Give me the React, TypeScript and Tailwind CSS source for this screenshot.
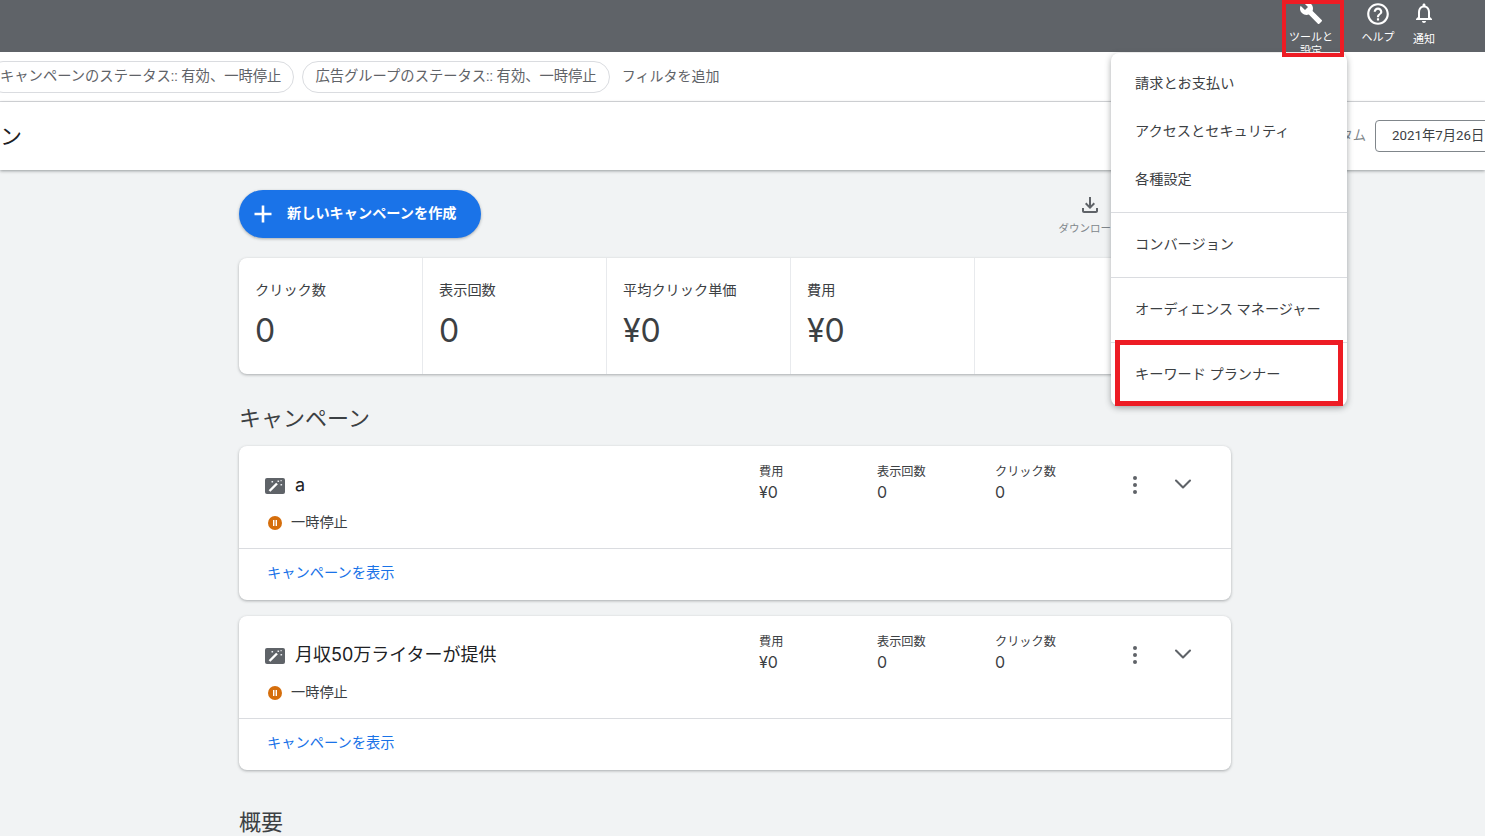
import { ChevronDown } from "lucide-react";

const buildPath =
  "M22.7 19l-9.1-9.1c.9-2.3.4-5-1.5-6.9-2-2-5-2.4-7.4-1.3L9 6 6 9 1.6 4.7C.4 7.1.9 10.1 2.9 12.1c1.9 1.9 4.6 2.4 6.9 1.5l9.1 9.1c.4.4 1 .4 1.4 0l2.3-2.3c.5-.4.5-1.1.1-1.4z";
const helpPath =
  "M11 18h2v-2h-2v2zm1-16C6.48 2 2 6.48 2 12s4.48 10 10 10 10-4.48 10-10S17.52 2 12 2zm0 18c-4.41 0-8-3.59-8-8s3.59-8 8-8 8 3.59 8 8-3.59 8-8 8zm0-14c-2.21 0-4 1.79-4 4h2c0-1.1.9-2 2-2s2 .9 2 2c0 2-3 1.75-3 5h2c0-2.25 3-2.5 3-5 0-2.21-1.79-4-4-4z";
const bellPath =
  "M12 22c1.1 0 2-.9 2-2h-4c0 1.1.89 2 2 2zm6-6v-5c0-3.07-1.64-5.64-4.5-6.32V4c0-.83-.67-1.5-1.5-1.5s-1.5.67-1.5 1.5v.68C7.63 5.36 6 7.92 6 11v5l-2 2v1h16v-1l-2-2zm-2 1H8v-6c0-2.48 1.51-4.5 4-4.5s4 2.02 4 4.5v6z";
const downloadPath =
  "M18 15v3H6v-3H4v3c0 1.1.9 2 2 2h12c1.1 0 2-.9 2-2v-3h-2zm-1-4l-1.41-1.41L13 12.17V4h-2v8.17L8.41 9.59 7 11l5 5 5-5z";

const stats = [
  { label: "クリック数", value: "0" },
  { label: "表示回数", value: "0" },
  { label: "平均クリック単価", value: "¥0" },
  { label: "費用", value: "¥0" },
];

const metrics = [
  { label: "費用", value: "¥0" },
  { label: "表示回数", value: "0" },
  { label: "クリック数", value: "0" },
];

const menuGroups = [
  ["請求とお支払い", "アクセスとセキュリティ", "各種設定"],
  ["コンバージョン"],
  ["オーディエンス マネージャー"],
  ["キーワード プランナー"],
];

const Icon = ({ d, className }: { d: string; className: string }) => (
  <svg viewBox="0 0 24 24" className={className} fill="currentColor">
    <path d={d} />
  </svg>
);

const CampaignCard = ({ name }: { name: string }) => (
  <div className="w-[992px] bg-white rounded-lg shadow-[0_1px_3px_rgba(60,64,67,0.4)]">
    <div className="h-[103px] flex border-b border-[#dadce0] pl-[26px]">
      <div className="w-[494px] pt-[28px]">
        <div className="flex items-center h-[24px]">
          <svg viewBox="0 0 20 16" className="w-[20px] h-[16px]">
            <rect width="20" height="16" rx="2" fill="#5f6368" />
            <path d="M4.5 13 12 5.5" stroke="#fff" strokeWidth="2.4" />
            <path d="M12.5 2.5h1.6v1.6h-1.6zM15.5 6h1.6v1.6h-1.6zM6.5 3h1.6v1.6H6.5zM15.5 2h1.2v1.2h-1.2z" fill="#e8eaed" />
          </svg>
          <span className="ml-[10px] -mt-[3px] text-[18px] text-[#202124] font-[Inter,'Noto_Sans_CJK_JP',sans-serif]">{name}</span>
        </div>
        <div className="flex items-center mt-[15px] pl-[3px] h-[20px]">
          <svg viewBox="0 0 14 14" className="w-[14px] h-[14px]">
            <circle cx="7" cy="7" r="7" fill="#d56e0c" />
            <path d="M5 4h1.4v6H5zM7.6 4H9v6H7.6z" fill="#fff" />
          </svg>
          <span className="ml-[9px] text-[14.2px] text-[#3c4043]">一時停止</span>
        </div>
      </div>
      <div className="flex pt-[17px]">
        {metrics.map((m) => (
          <div key={m.label} className="w-[118px]">
            <div className="text-[12.2px] leading-[18px] text-[#3c4043]">{m.label}</div>
            <div className="text-[16px] leading-[22px] text-[#3c4043] font-[Inter,sans-serif]">{m.value}</div>
          </div>
        ))}
      </div>
      <div className="pt-[30px] pl-[20px] flex flex-col gap-[3px] w-[48px] items-start">
        <span className="block w-[4px] h-[4px] rounded-full bg-[#5f6368]" />
        <span className="block w-[4px] h-[4px] rounded-full bg-[#5f6368]" />
        <span className="block w-[4px] h-[4px] rounded-full bg-[#5f6368]" />
      </div>
      <div className="pt-[24px] pl-[8px]">
        <ChevronDown className="w-[28px] h-[28px] text-[#5f6368]" strokeWidth={1.8} />
      </div>
    </div>
    <div className="h-[51px] flex items-center pl-[28px] pb-[2px] text-[14.25px] text-[#1a73e8]">キャンペーンを表示</div>
  </div>
);

export default function App() {
  return (
    <div
      className="relative w-[1485px] h-[836px] overflow-hidden bg-[#f1f3f4]"
      style={{ fontFamily: 'Roboto, "Noto Sans CJK JP", sans-serif' }}
    >
      {/* ヘッダー */}
      <div className="h-[52px] bg-[#5f6368] flex justify-end pr-[41px] overflow-hidden text-white">
        <div className="w-[60px] mr-[11px] flex flex-col items-center pt-[1px]">
          <Icon d={buildPath} className="w-[24px] h-[24px] shrink-0" />
          <div className="text-[11px] leading-[14px] mt-[6px] text-center shrink-0">
            ツールと
            <br />
            設定
          </div>
        </div>
        <div className="w-[52px] flex flex-col items-center pt-[1px]">
          <Icon d={helpPath} className="w-[26px] h-[26px] shrink-0" />
          <div className="text-[11px] leading-[14px] mt-[4px]">ヘルプ</div>
        </div>
        <div className="w-[40px] flex flex-col items-center pt-[1px]">
          <Icon d={bellPath} className="w-[24px] h-[24px] shrink-0" />
          <div className="text-[11px] leading-[14px] mt-[8px]">通知</div>
        </div>
      </div>

      {/* フィルタ */}
      <div className="h-[50px] bg-white border-b border-[#dadce0] flex items-center gap-[8px] -ml-[13px] text-[14.3px] text-[#5f6368]">
        <div className="h-[32px] flex items-center px-[12px] border border-[#dadce0] rounded-full whitespace-nowrap">
          キャンペーンのステータス:: 有効、一時停止
        </div>
        <div className="h-[32px] flex items-center px-[12px] border border-[#dadce0] rounded-full whitespace-nowrap">
          広告グループのステータス:: 有効、一時停止
        </div>
        <span className="ml-[4px] text-[14px]">フィルタを追加</span>
      </div>

      {/* タイトル */}
      <div className="relative h-[68px] bg-white shadow-[0_1px_3px_rgba(60,64,67,0.5)] flex items-center justify-between">
        <span className="text-[22px] text-[#202124]">ン</span>
        <div className="flex items-center gap-[9px] -mr-[40px]">
          <span className="text-[13.3px] text-[#80868b]">カスタム</span>
          <div className="w-[150px] h-[32px] flex items-center pl-[16px] border border-[#80868b] rounded text-[13.3px] text-[#3c4043]">
            2021年7月26日
          </div>
        </div>
      </div>

      {/* メイン */}
      <div className="pl-[239px]">
        <div className="w-[992px] mt-[20px] flex justify-between">
          <div className="w-[242px] h-[48px] rounded-full bg-[#1a73e8] shadow-[0_1px_3px_rgba(60,64,67,0.4)] flex items-center pl-[14px] text-white">
            <svg viewBox="0 0 20 20" className="w-[20px] h-[20px]" fill="currentColor">
              <path d="M8.7 1.5h2.6v7.2h7.2v2.6h-7.2v7.2H8.7v-7.2H1.5V8.7h7.2z" />
            </svg>
            <span className="ml-[14px] text-[14.2px] font-bold">新しいキャンペーンを作成</span>
          </div>
          <div className="w-[60px] mr-[111px] flex flex-col items-center whitespace-nowrap">
            <Icon d={downloadPath} className="w-[24px] h-[24px] text-[#5f6368] mt-[3px]" />
            <span className="text-[10.5px] leading-[14px] mt-[5px] text-[#80868b]">ダウンロード</span>
          </div>
        </div>

        <div className="w-[992px] h-[116px] mt-[20px] bg-white rounded-lg shadow-[0_1px_3px_rgba(60,64,67,0.4)] flex">
          {stats.map((s) => (
            <div key={s.label} className="w-[184px] border-r border-[#e8eaed] pl-[16px] pt-[22px]">
              <div className="text-[14.2px] leading-[20px] text-[#3c4043]">{s.label}</div>
              <div className="text-[32px] leading-[40px] mt-[11px] text-[#3c4043] font-[Inter,sans-serif]">{s.value}</div>
            </div>
          ))}
        </div>

        <h2 className="mt-[29px] mb-[11px] text-[22px] leading-[32px] font-normal text-[#3c4043]">キャンペーン</h2>

        <div className="flex flex-col gap-[16px]">
          <CampaignCard name="a" />
          <CampaignCard name="月収50万ライターが提供" />
        </div>

        <h2 className="mt-[37px] text-[22px] leading-[32px] font-normal text-[#3c4043]">概要</h2>
      </div>

      {/* 設定メニュー */}
      <div className="absolute left-[1111px] top-[53px] w-[236px] bg-white rounded-lg shadow-[0_2px_6px_rgba(60,64,67,0.45)] pt-[6px] text-[14.2px] text-[#3c4043]">
        {menuGroups.map((group, idx) => (
          <div key={idx} className={idx < menuGroups.length - 1 ? "pb-[9px] mb-[7px] border-b border-[#dadce0]" : "pb-[8px]"}>
            {group.map((item) => (
              <div key={item} className="h-[48px] flex items-center pl-[24px] pt-[2px] whitespace-nowrap">
                {item}
              </div>
            ))}
          </div>
        ))}
      </div>

      {/* 赤枠 */}
      <div className="absolute left-[1282px] top-0 w-[62px] h-[57px] border-[4px] border-[#ed1c24]" />
      <div className="absolute left-[1115px] top-[340px] w-[228px] h-[66px] border-[5px] border-[#ed1c24]" />
    </div>
  );
}
